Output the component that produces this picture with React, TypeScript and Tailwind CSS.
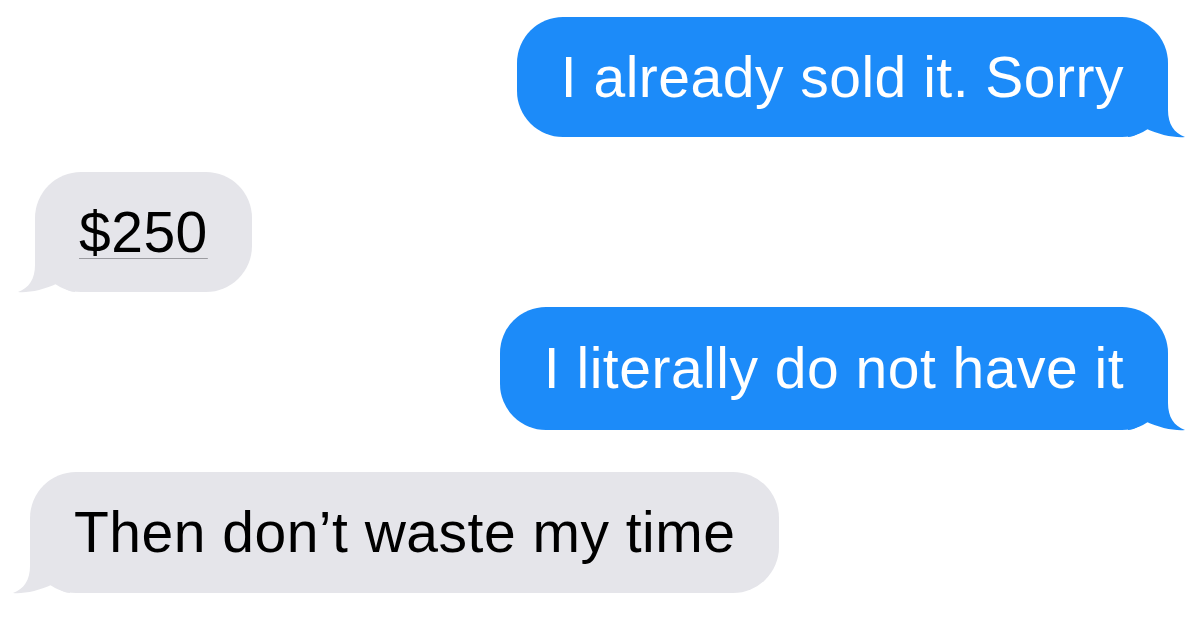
import React from "react";

// ── iMessage-style tail, drawn for the right side; mirrored for the left ──
function Tail({ side, color }: { side: "left" | "right"; color: string }) {
  return (
    <svg
      aria-hidden="true"
      width="60"
      height="52"
      viewBox="0 0 60 52"
      className={
        side === "right"
          ? "absolute -right-[20px] -bottom-[1px]"
          : "absolute -left-[20px] -bottom-[1px] -scale-x-100"
      }
    >
      <path
        d="M0 0 H40 V24 C40 38 46 47 57 51 C47 52 31 49 17 42 C12 47 6 51 0 51 Z"
        fill={color}
      />
    </svg>
  );
}

function Bubble({
  text,
  mine,
  height,
  underline,
}: {
  text: string;
  mine?: boolean;
  height: string;
  underline?: boolean;
}) {
  const color = mine ? "#1c8bf9" : "#e5e5ea";
  return (
    <div
      className={`relative flex items-center rounded-[46px] px-[44px] ${height} ${
        mine ? "bg-[#1c8bf9] text-white" : "bg-[#e5e5ea] text-black"
      }`}
    >
      <Tail side={mine ? "right" : "left"} color={color} />
      <span
        className={`relative whitespace-nowrap text-[57px] leading-none tracking-[0.5px] ${
          underline ? "underline decoration-[#9b9ba0] decoration-1 underline-offset-[6px]" : ""
        }`}
        style={{ fontFamily: '"Liberation Sans", Arial, sans-serif' }}
      >
        {text}
      </span>
    </div>
  );
}

export default function App() {
  return (
    <main className="w-[1200px] h-[630px] overflow-hidden bg-white flex flex-col px-[32px] pt-[17px]">
      <div className="flex justify-end">
        <Bubble mine text="I already sold it. Sorry" height="h-[120px]" />
      </div>
      <div className="flex justify-start mt-[35px] pl-[3px]">
        <Bubble text="$250" height="h-[120px]" underline />
      </div>
      <div className="flex justify-end mt-[15px]">
        <Bubble mine text="I literally do not have it" height="h-[123px]" />
      </div>
      <div className="flex justify-start mt-[42px] -ml-[2px]">
        <Bubble text="Then don’t waste my time" height="h-[121px]" />
      </div>
    </main>
  );
}
